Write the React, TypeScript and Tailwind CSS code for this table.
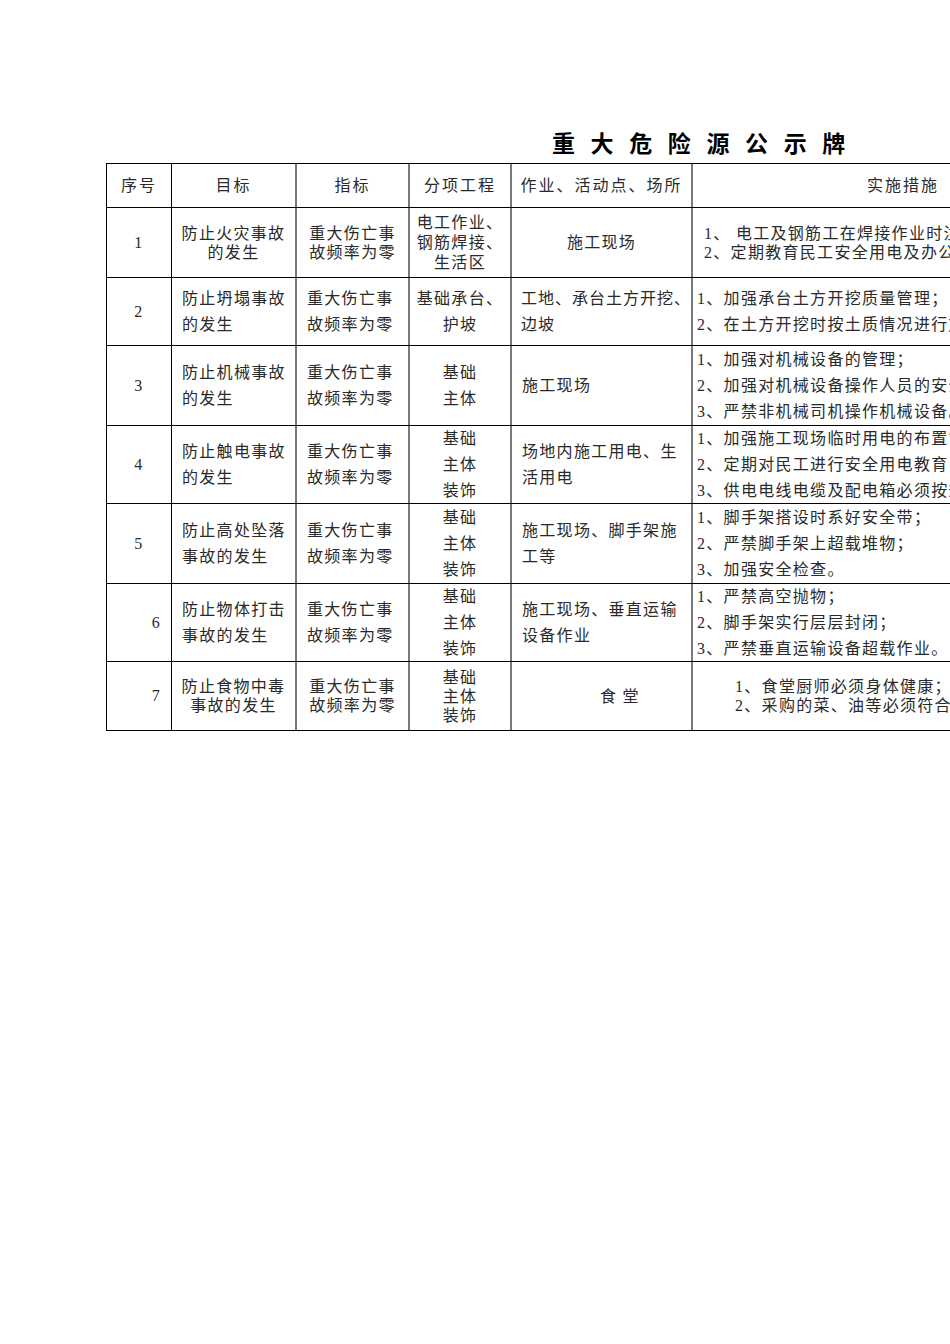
import React from "react";

type C = { cls: string; lines: string[] };

const W = [
  "w-[65px] border-r border-black",
  "w-[125px] border-r-2 border-[#7a7a7a]",
  "w-[113px] border-r-2 border-[#7a7a7a]",
  "w-[102px] border-r-2 border-[#7a7a7a]",
  "w-[181px] border-r-2 border-[#7a7a7a]",
  "w-[420px]",
];

function Row({ h, cells }: { h: string; cells: C[] }) {
  return (
    <div className={"flex border-b border-black " + h}>
      {cells.map((c, i) => (
        <div
          key={i}
          className={"flex shrink-0 flex-col justify-center overflow-hidden " + W[i] + " " + c.cls}
        >
          {c.lines.map((l, j) => (
            <div key={j} className="whitespace-nowrap">
              {l}
            </div>
          ))}
        </div>
      ))}
    </div>
  );
}

const CEN = "items-center text-center leading-[19px]";
const LEFT = "pl-[10px] leading-[26px]";
const CEN26 = "items-center text-center leading-[26px]";
const M = "pl-[4px] leading-[26px]";

export default function App() {
  return (
    <div className="h-[1344px] w-[950px] overflow-hidden bg-white pt-[131px] font-['Liberation_Serif','Noto_Sans_CJK_SC',serif] text-[16px] tracking-[1.3px] text-[#2a2a2a]">
      <div className="ml-[552px] h-[23px] whitespace-nowrap font-['Noto_Sans_CJK_SC',sans-serif] text-[23px] font-bold leading-[23px] tracking-[5.2px] text-black">
        重 大 危 险 源 公 示 牌
      </div>
      <div className="ml-[106px] mt-[9px] w-max border-l border-t border-black">
        <Row
          h="h-[44px]"
          cells={[
            { cls: "items-center tracking-[2px]", lines: ["序号"] },
            { cls: "items-center tracking-[2px]", lines: ["目标"] },
            { cls: "items-center tracking-[2px]", lines: ["指标"] },
            { cls: "items-center tracking-[2px]", lines: ["分项工程"] },
            { cls: "items-center tracking-[2px]", lines: ["作业、活动点、场所"] },
            { cls: "items-center tracking-[2px]", lines: ["实施措施"] },
          ]}
        />
        <Row
          h="h-[70px]"
          cells={[
            { cls: "items-center", lines: ["1"] },
            { cls: CEN, lines: ["防止火灾事故", "的发生"] },
            { cls: CEN, lines: ["重大伤亡事", "故频率为零"] },
            { cls: "items-center text-center leading-[20px]", lines: ["电工作业、", "钢筋焊接、", "生活区"] },
            { cls: "items-center", lines: ["施工现场"] },
            {
              cls: "pl-[11px] leading-[19px]",
              lines: ["1、 电工及钢筋工在焊接作业时注意周边易燃物；", "2、定期教育民工安全用电及办公区、生活区防火。"],
            },
          ]}
        />
        <Row
          h="h-[68px]"
          cells={[
            { cls: "items-center", lines: ["2"] },
            { cls: LEFT, lines: ["防止坍塌事故", "的发生"] },
            { cls: LEFT, lines: ["重大伤亡事", "故频率为零"] },
            { cls: CEN26, lines: ["基础承台、", "护坡"] },
            { cls: "pl-[9px] tracking-[1px] leading-[26px]", lines: ["工地、承台土方开挖、", "边坡"] },
            { cls: M, lines: ["1、加强承台土方开挖质量管理；", "2、在土方开挖时按土质情况进行放坡。"] },
          ]}
        />
        <Row
          h="h-[80px]"
          cells={[
            { cls: "items-center", lines: ["3"] },
            { cls: LEFT, lines: ["防止机械事故", "的发生"] },
            { cls: LEFT, lines: ["重大伤亡事", "故频率为零"] },
            { cls: CEN26, lines: ["基础", "主体"] },
            { cls: "pl-[10px] leading-[26px]", lines: ["施工现场"] },
            {
              cls: M,
              lines: ["1、加强对机械设备的管理；", "2、加强对机械设备操作人员的安全教育；", "3、严禁非机械司机操作机械设备。"],
            },
          ]}
        />
        <Row
          h="h-[78px]"
          cells={[
            { cls: "items-center", lines: ["4"] },
            { cls: LEFT, lines: ["防止触电事故", "的发生"] },
            { cls: LEFT, lines: ["重大伤亡事", "故频率为零"] },
            { cls: CEN26, lines: ["基础", "主体", "装饰"] },
            { cls: "pl-[10px] leading-[26px]", lines: ["场地内施工用电、生", "活用电"] },
            {
              cls: M,
              lines: ["1、加强施工现场临时用电的布置管理；", "2、定期对民工进行安全用电教育；", "3、供电电线电缆及配电箱必须按规范设置。"],
            },
          ]}
        />
        <Row
          h="h-[80px]"
          cells={[
            { cls: "items-center", lines: ["5"] },
            { cls: LEFT, lines: ["防止高处坠落", "事故的发生"] },
            { cls: LEFT, lines: ["重大伤亡事", "故频率为零"] },
            { cls: CEN26, lines: ["基础", "主体", "装饰"] },
            { cls: "pl-[10px] leading-[26px]", lines: ["施工现场、脚手架施", "工等"] },
            { cls: M, lines: ["1、脚手架搭设时系好安全带；", "2、严禁脚手架上超载堆物；", "3、加强安全检查。"] },
          ]}
        />
        <Row
          h="h-[78px]"
          cells={[
            { cls: "items-end pr-[10px]", lines: ["6"] },
            { cls: LEFT, lines: ["防止物体打击", "事故的发生"] },
            { cls: LEFT, lines: ["重大伤亡事", "故频率为零"] },
            { cls: CEN26, lines: ["基础", "主体", "装饰"] },
            { cls: "pl-[10px] leading-[26px]", lines: ["施工现场、垂直运输", "设备作业"] },
            { cls: M, lines: ["1、严禁高空抛物；", "2、脚手架实行层层封闭；", "3、严禁垂直运输设备超载作业。"] },
          ]}
        />
        <Row
          h="h-[69px]"
          cells={[
            { cls: "items-end pr-[10px]", lines: ["7"] },
            { cls: CEN, lines: ["防止食物中毒", "事故的发生"] },
            { cls: CEN, lines: ["重大伤亡事", "故频率为零"] },
            { cls: CEN, lines: ["基础", "主体", "装饰"] },
            { cls: "pl-[88px] leading-[19px]", lines: ["食 堂"] },
            { cls: "pl-[42px] leading-[19px]", lines: ["1、食堂厨师必须身体健康；", "2、采购的菜、油等必须符合卫生标准。"] },
          ]}
        />
      </div>
    </div>
  );
}
